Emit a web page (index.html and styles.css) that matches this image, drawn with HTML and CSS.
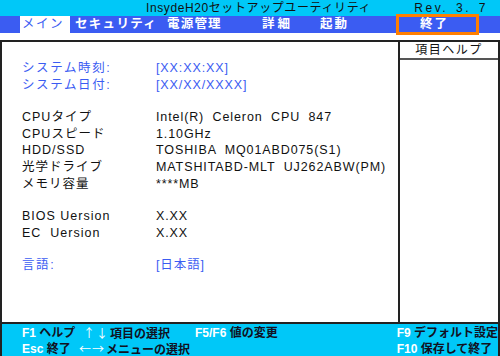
FILE: index.html
```html
<!DOCTYPE html>
<html lang="ja">
<head>
<meta charset="utf-8">
<link rel="stylesheet" href="styles.css">
</head>
<body>
<div class="screen">
  <div class="titlebar">
    <span class="title">InsydeH20セットアップユーティリティ</span>
    <span class="rev">Rev. 3. 7</span>
  </div>
  <div class="menubar">
    <span class="tab tab-main active">メイン</span>
    <span class="tab tab-sec">セキュリティ</span>
    <span class="tab tab-pow">電源管理</span>
    <span class="tab tab-adv">詳細</span>
    <span class="tab tab-boot">起動</span>
    <span class="tab tab-exit">終了</span>
  </div>
  <div class="frame">
    <div class="body">
      <div class="content">
        <div class="group blue">
          <div class="row"><span class="label">システム時刻:</span><span class="val">[XX:XX:XX]</span></div>
          <div class="row"><span class="label">システム日付:</span><span class="val">[XX/XX/XXXX]</span></div>
        </div>
        <div class="group">
          <div class="row"><span class="label">CPUタイプ</span><span class="val">Intel(R) Celeron CPU 847</span></div>
          <div class="row"><span class="label">CPUスピード</span><span class="val">1.10GHz</span></div>
          <div class="row"><span class="label">HDD/SSD</span><span class="val">TOSHIBA MQ01ABD075(S1)</span></div>
          <div class="row"><span class="label">光学ドライブ</span><span class="val">MATSHITABD-MLT UJ262ABW(PM)</span></div>
          <div class="row"><span class="label">メモリ容量</span><span class="val">****MB</span></div>
        </div>
        <div class="group">
          <div class="row"><span class="label">BIOS Uersion</span><span class="val">X.XX</span></div>
          <div class="row"><span class="label">EC&nbsp; Uersion</span><span class="val">X.XX</span></div>
        </div>
        <div class="group blue">
          <div class="row"><span class="label">言語:</span><span class="val">[日本語]</span></div>
        </div>
      </div>
      <div class="help">
        <div class="help-head">項目ヘルプ</div>
        <div class="help-body"></div>
      </div>
    </div>
    <div class="footer">
      <div class="keys">
        <div class="krow">
          <span class="k1"><b>F1</b> ヘルプ</span>
          <span class="k2"><b class="arr">↑↓</b>項目の選択</span>
          <span class="k3"><b>F5/F6</b> 値の変更</span>
        </div>
        <div class="krow">
          <span class="k1"><b>Esc</b> 終了</span>
          <span class="k2b"><b class="arr">←→</b>メニューの選択</span>
        </div>
      </div>
      <div class="keys right">
        <div class="krow"><span><b>F9</b> デフォルト設定</span></div>
        <div class="krow"><span><b>F10</b> 保存して終了</span></div>
      </div>
    </div>
  </div>
</div>
</body>
</html>
```
FILE: styles.css
```css
* { box-sizing: border-box; }
html, body { margin: 0; padding: 0; background: #fff; }
body {
  width: 500px;
  height: 356px;
  overflow: hidden;
  font-family: "Liberation Sans", "Noto Sans CJK JP", sans-serif;
  font-size: 12px;
  color: #111;
}
.screen { width: 500px; height: 356px; display: flex; flex-direction: column; }

.titlebar {
  height: 16px;
  background: #00c8f8;
  display: flex;
  align-items: center;
  line-height: 16px;
  color: #111;
}
.title { margin-left: 146px; letter-spacing: 0.6px; }
.rev { margin-left: auto; margin-right: 12px; letter-spacing: 2.5px; word-spacing: 2px; }

.menubar {
  height: 17px;
  background: #3b5cf2;
  display: flex;
  align-items: stretch;
  color: #fff;
  font-weight: 700;
  font-size: 12.5px;
  line-height: 17px;
  white-space: nowrap;
}
.tab { display: block; }
.tab-main { margin-left: 20px; width: 50px; padding-left: 2px; }
.tab-sec { margin-left: 5px; width: 92px; letter-spacing: 1.3px; }
.tab-pow { margin-left: 0; width: 58px; letter-spacing: 1.2px; }
.tab-adv { margin-left: 37px; width: 34px; letter-spacing: 3px; }
.tab-boot { margin-left: 24px; width: 32px; letter-spacing: 2px; }
.tab-exit {
  margin-left: 46px;
  width: 79px;
  padding-left: 22px;
  letter-spacing: 2px;
  outline: 3px solid #ff7f00;
  outline-offset: -1px;
}
.tab.active { background: #fff; color: #3b5cf2; font-weight: 400; letter-spacing: 1.5px; }

.frame {
  margin-top: 7px;
  flex: 1;
  display: flex;
  flex-direction: column;
  border-left: 2px solid #222;
  border-right: 2px solid #222;
  border-top: 2px solid #222;
}
.body { flex: 1; display: flex; }
.content {
  flex: 1;
  padding: 18px 0 0 20px;
  display: flex;
  flex-direction: column;
  gap: 16px;
  font-size: 12.5px;
}
.group { display: flex; flex-direction: column; }
.row { display: flex; height: 16.6px; line-height: 16.6px; }
.label { width: 134px; letter-spacing: 1px; }
.val { letter-spacing: 0.9px; word-spacing: 4px; }
.blue { color: #3b5cf2; }
.group.blue .label { letter-spacing: 1.6px; }

.help {
  width: 100px;
  border-left: 2px solid #222;
  display: flex;
  flex-direction: column;
}
.help-head {
  height: 18px;
  line-height: 17px;
  text-align: center;
  border-bottom: 2px solid #555;
  letter-spacing: 1.5px;
}
.help-body { flex: 1; }

.footer {
  height: 34px;
  background: #00c8f8;
  border-top: 2px solid #222;
  display: flex;
  font-size: 12px;
  font-weight: 700;
  color: #112;
}
.keys { flex: 1; padding: 1px 0 0 20px; }
.keys.right { flex: 0 0 100px; padding-left: 0; padding-right: 0; }
.krow { display: flex; height: 16px; line-height: 16px; white-space: nowrap; }
.keys b { color: #fff; font-weight: 700; }
.keys b.arr { font-family: "Noto Sans CJK JP", sans-serif; font-weight: 400; letter-spacing: 1px; padding-right: 1px; }
.k1 { width: 61px; }
.k2 { width: 112px; }
.k2b { margin-left: -4px; }
```
